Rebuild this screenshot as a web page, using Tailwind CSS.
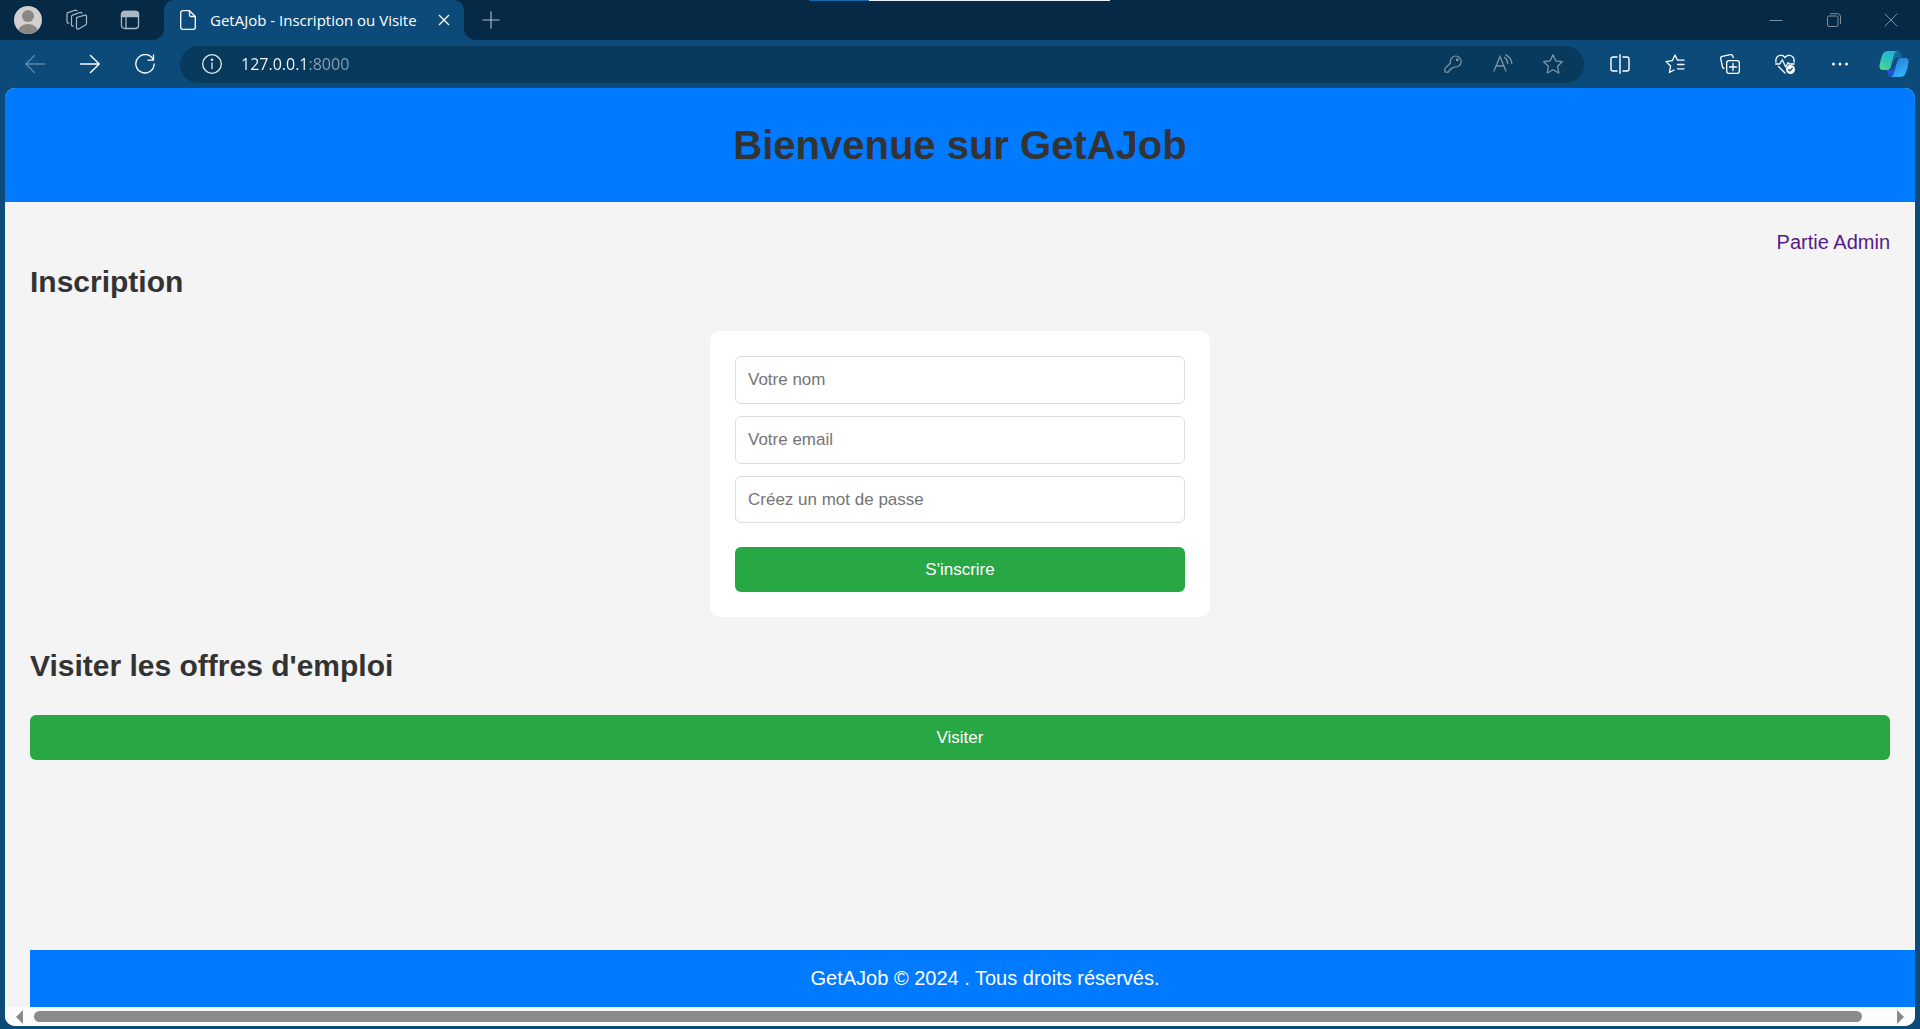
<!DOCTYPE html>
<html lang="fr">
<head>
<meta charset="utf-8">
<meta name="viewport" content="width=device-width, initial-scale=1">
<title>GetAJob - Inscription ou Visite</title>
<script src="https://cdn.jsdelivr.net/npm/@tailwindcss/browser@4"></script>
</head>
<body class="flex min-h-screen flex-col bg-[#0c4a79] font-['Open_Sans','Noto_Sans',sans-serif]">

<!-- Tab strip -->
<div class="relative flex h-10 shrink-0 items-center bg-[#062a45]">
  <div class="absolute top-0 left-1/2 -ml-[151px] flex h-px w-[301px]">
    <div class="w-[60px] bg-[#1468ad]"></div>
    <div class="flex-1 bg-[#e6f1f8]"></div>
  </div>
  <button aria-label="Profil" class="ml-3.5 size-7">
    <svg viewBox="0 0 28 28" class="size-7"><clipPath id="av"><circle cx="14" cy="14" r="14"/></clipPath><g clip-path="url(#av)"><rect width="28" height="28" fill="#d2d0ce"/><circle cx="14" cy="10" r="6" fill="#8a8784"/><path d="M4 27c0-5.500 4-9 10-9s10 3.500 10 9v2H4z" fill="#8a8784"/></g></svg>
  </button>
  <button aria-label="Espaces de travail" class="ml-6 text-[#a8b8c5]">
    <svg viewBox="0 0 22 22" class="size-[22px]" fill="none" stroke="currentColor" stroke-width="1.200" stroke-linejoin="round" stroke-linecap="round"><path d="M10.500 8.500 19 6.200q1.500-.3 1.500 1.100v7.200q0 1-1 1.400l-7 4q-2 .8-2-.9v-9.200q0-1 .9-1.300z"/><path d="M7.500 17q-2 .500-2-1.300V7.500q0-1 1-1.400l7.500-2.600q1.700-.5 2 .9"/><path d="M3 14Q1 14.400 1 12.700V5q0-1 1-1.400l7-2.300q1.700-.5 2 .7"/></svg>
  </button>
  <button aria-label="Onglets verticaux" class="ml-8 mr-6 text-[#a8b8c5]">
    <svg viewBox="0 0 20 20" class="size-5" fill="none" stroke="currentColor" stroke-width="1.300"><rect x="1.500" y="1.500" width="17" height="17" rx="3"/><path d="M6 6v12.500"/><path d="M1.500 6.500V4.500a3 3 0 0 1 3-3h11a3 3 0 0 1 3 3v2z" fill="currentColor"/></svg>
  </button>
  <div class="relative flex h-10 w-[300px] items-center rounded-t-[10px] bg-[#0c4a79] text-white">
    <svg viewBox="0 0 12 12" class="absolute bottom-0 right-full size-3"><path d="M12 0v12H0A12 12 0 0 0 12 0z" fill="#0c4a79"/></svg>
    <svg viewBox="0 0 12 12" class="absolute bottom-0 left-full size-3"><path d="M0 0v12h12A12 12 0 0 1 0 0z" fill="#0c4a79"/></svg>
    <svg viewBox="0 0 16 20" class="ml-4 h-5 w-4" fill="none" stroke="currentColor" stroke-width="1.300" stroke-linejoin="round"><path d="M2.700.700h6.800l5.800 5.800v10.800a2 2 0 0 1-2 2H2.700a2 2 0 0 1-2-2V2.700a2 2 0 0 1 2-2z"/><path d="M9.500.700v4.300a1.500 1.500 0 0 0 1.500 1.500h4.300"/></svg>
    <span class="ml-3.5 flex-1 whitespace-nowrap text-[15px]">GetAJob - Inscription ou Visite</span>
    <button aria-label="Fermer l'onglet" class="mr-3.5">
      <svg viewBox="0 0 12 12" class="size-3" stroke="currentColor" stroke-width="1.300"><path d="m1 1 10 10M11 1 1 11"/></svg>
    </button>
  </div>
  <button aria-label="Nouvel onglet" class="ml-[18px] text-[#a8b8c5]">
    <svg viewBox="0 0 18 18" class="size-[18px]" stroke="currentColor" stroke-width="1.200"><path d="M9 .5v17M.5 9h17"/></svg>
  </button>
  <div class="ml-auto flex text-[#7f909e]">
    <button aria-label="Réduire" class="flex w-[58px] justify-center"><svg viewBox="0 0 14 14" class="size-3.5" stroke="currentColor"><path d="M.5 7.500h13"/></svg></button>
    <button aria-label="Restaurer" class="flex w-[57px] justify-center"><svg viewBox="0 0 14 14" class="size-3.5" fill="none" stroke="currentColor"><rect x=".5" y="3" width="10.500" height="10.500" rx="1.500"/><path d="M3 .7h7.500a3 3 0 0 1 3 3V11"/></svg></button>
    <button aria-label="Fermer" class="flex w-[58px] justify-center"><svg viewBox="0 0 14 14" class="size-3.5" stroke="currentColor"><path d="m.7.7 12.600 12.600M13.300.7.7 13.300"/></svg></button>
  </div>
</div>

<!-- Toolbar -->
<div class="flex h-12 shrink-0 items-center pl-[7px] text-white">
  <button aria-label="Précédent" class="flex w-[55px] justify-center text-[#5a88aa]"><svg viewBox="0 0 20 20" class="size-5" fill="none" stroke="currentColor" stroke-width="1.400" stroke-linecap="round" stroke-linejoin="round"><path d="M19.300 10H.8M9.500 1.500.8 10l8.700 8.500"/></svg></button>
  <button aria-label="Suivant" class="flex w-[55px] justify-center"><svg viewBox="0 0 20 20" class="size-5" fill="none" stroke="currentColor" stroke-width="1.400" stroke-linecap="round" stroke-linejoin="round"><path d="M.7 10h18.500M10.500 1.500l8.700 8.500-8.700 8.500"/></svg></button>
  <button aria-label="Actualiser" class="flex w-[55px] justify-center"><svg viewBox="0 0 20 20" class="size-5" fill="none" stroke="currentColor" stroke-width="1.300" stroke-linecap="round" stroke-linejoin="round"><path d="M18.500 6.200A9.200 9.200 0 1 0 19.200 10M18.500.800v5.400H13"/></svg></button>
  <div class="mx-2 flex h-[37px] min-w-0 flex-1 items-center rounded-full bg-[#083a5e] pl-[22px] pr-1.5 text-[#7d95a8]">
    <svg viewBox="0 0 20 20" class="size-5 text-[#e4edf4]" fill="none" stroke="currentColor" stroke-width="1.300"><circle cx="10" cy="10" r="9.300"/><path d="M10 8.500V15"/><circle cx="10" cy="5.800" r=".6" fill="currentColor"/></svg>
    <input aria-label="Adresse" value="127.0.0.1:8000" class="ml-[19px] min-w-0 flex-1 bg-[linear-gradient(to_right,#ffffff_68px,#8d9fae_68px)] bg-clip-text text-base text-transparent outline-none">
    <button aria-label="Mots de passe" class="flex w-[50px] justify-center"><svg viewBox="0 0 18 18" class="size-[18px]" fill="none" stroke="currentColor" stroke-width="1.200" stroke-linejoin="round"><path d="M11.500 1a5.500 5.500 0 1 1-1.300 10.800L9 13H7v2H5v1.500l-.8.700H1.700q-.8 0-.8-.8v-2.500q0-.4.300-.7l5.300-5.200A5.600 5.600 0 0 1 11.500 1z"/><circle cx="13.300" cy="4.700" r=".9" fill="currentColor"/></svg></button>
    <button aria-label="Lecture à voix haute" class="flex w-[50px] justify-center"><svg viewBox="0 0 20 20" class="size-5" fill="none" stroke="currentColor" stroke-width="1.300" stroke-linecap="round"><path d="M1 17 7 2.500 13 17M3.200 12h7.600M11.500 3.500a8 8 0 0 1 3.300 6M12.800.8a11 11 0 0 1 6 8.700"/></svg></button>
    <button aria-label="Ajouter aux favoris" class="flex w-[50px] justify-center"><svg viewBox="0 0 20 20" class="size-5" fill="none" stroke="currentColor" stroke-width="1.300" stroke-linejoin="round"><path d="m10 .8 2.800 6 6.500.9-4.700 4.600 1.200 6.700-5.800-3.200L4.200 19l1.200-6.700L.7 7.700l6.500-.9z"/></svg></button>
  </div>
  <button aria-label="Écran partagé" class="flex w-[55px] justify-center"><svg viewBox="0 0 20 20" class="size-5" fill="none" stroke="currentColor" stroke-width="1.400" stroke-linecap="round"><path d="M10 .7v18.600M7 3H3a2 2 0 0 0-2 2v10a2 2 0 0 0 2 2h4M13 3h4a2 2 0 0 1 2 2v10a2 2 0 0 1-2 2h-4"/></svg></button>
  <button aria-label="Favoris" class="flex w-[55px] justify-center"><svg viewBox="0 0 20 20" class="size-5" fill="none" stroke="currentColor" stroke-width="1.300" stroke-linecap="round" stroke-linejoin="round"><path d="M19 6.200h-6.500L10 1 7.300 6.700 1 7.600 5.600 12l-1.200 6.500L9 16M12.500 10.500H19M12.500 14.800H19"/></svg></button>
  <button aria-label="Collections" class="flex w-[55px] justify-center"><svg viewBox="0 0 20 20" class="size-5" fill="none" stroke="currentColor" stroke-width="1.300" stroke-linecap="round" stroke-linejoin="round"><rect x="6.700" y="6.700" width="12.600" height="12.600" rx="2.200"/><path d="M13 9.500v7M9.500 13h7M4 14.300Q2.700 14 2.500 13L.7 4.500Q.5 2.700 2 2.300L10.500.7q2-.2 2.300 1.300l.4 1.700"/></svg></button>
  <button aria-label="Informations de base" class="flex w-[55px] justify-center"><svg viewBox="0 0 20 20" class="size-5" fill="none" stroke="currentColor" stroke-width="1.300" stroke-linecap="round" stroke-linejoin="round"><path d="M1 8C.3 4.500 2.300 1.500 5.300 1.300 7.500 1 9.200 2.200 10 3.700c.8-1.500 2.500-2.700 4.700-2.400C17.700 1.500 19.700 4.500 19 8M.7 10h4l2.600-4.200 3.400 7.200 2.400-4.500 1 1.500h5M3.500 12.500 10 19"/><circle cx="15.500" cy="15.500" r="4.500" fill="currentColor" stroke="none"/><path d="m13.700 15.700 1.300 1.200 2.300-2.600" stroke="#0c4a79"/></svg></button>
  <button aria-label="Paramètres" class="flex w-[55px] justify-center"><svg viewBox="0 0 18 18" class="size-[18px]" fill="currentColor"><circle cx="2.500" cy="9" r="1.500"/><circle cx="9" cy="9" r="1.500"/><circle cx="15.500" cy="9" r="1.500"/></svg></button>
  <button aria-label="Copilot" class="flex w-[53px] justify-center">
    <svg viewBox="0 0 30 28" class="h-7 w-[30px]"><defs><linearGradient id="ca" x1="0" y1="1" x2=".6" y2="0"><stop offset="0" stop-color="#5bd68a"/><stop offset=".5" stop-color="#2fc6b4"/><stop offset="1" stop-color="#25b4dc"/></linearGradient><linearGradient id="cb" x1="0" y1="0" x2=".5" y2="1"><stop offset="0" stop-color="#2a74d8"/><stop offset="1" stop-color="#30b3f6"/></linearGradient></defs><path d="M15 1h3.500q2.500 0 3.300 2.500L23 7.500h-4.500q-2 0-2.700 2.500L14 15z" fill="#146a94"/><path d="M15 27h-3q-2.500 0-3.200-2.500L7.500 20H12q2 0 2.600-2.500L16 13z" fill="#1c54d0"/><path d="M9.500 1H18q-2 .5-2.700 3l-3.500 13q-.8 3-3.800 3H4Q0 20 .500 15.500 1.500 8.500 4 3.500 5.500 1 9.500 1z" fill="url(#ca)"/><path d="M20.500 27H12q2-.5 2.700-3l3.500-13q.8-3 3.800-3h4q4 0 3.500 4.500-1 7-3.500 12-1.500 2.500-5.500 2.500z" fill="url(#cb)"/></svg>
  </button>
</div>

<!-- Page viewport -->
<div class="mx-[5px] mb-[3px] flex flex-1 flex-col overflow-hidden rounded-[10px] bg-[#f4f4f4] font-['Liberation_Sans',Arial,sans-serif] text-xl text-[#333333]">
  <header class="bg-[#007bff] px-6 py-[25px] text-center">
    <h1 class="text-[40px] leading-[64px] font-bold">Bienvenue sur GetAJob</h1>
  </header>

  <main class="flex flex-1 flex-col px-[25px] pt-6 pb-[25px]">
    <nav class="text-right leading-8"><a href="#admin" class="text-[#551a8b]">Partie Admin</a></nav>

    <section>
      <h2 class="text-3xl leading-[48px] font-bold">Inscription</h2>
      <form class="mx-auto my-[25px] flex w-full max-w-[500px] flex-col gap-3 rounded-[10px] bg-white p-[25px] text-[17px]">
        <input type="text" aria-label="Votre nom" placeholder="Votre nom" class="h-12 rounded-md border border-[#dddddd] px-3 placeholder:text-[#757575]">
        <input type="email" aria-label="Votre email" placeholder="Votre email" class="h-12 rounded-md border border-[#dddddd] px-3 placeholder:text-[#757575]">
        <input type="password" aria-label="Créez un mot de passe" placeholder="Créez un mot de passe" class="h-[47px] rounded-md border border-[#dddddd] px-3 placeholder:text-[#757575]">
        <button type="button" class="mt-3 h-[45px] rounded-md bg-[#28a745] text-white">S'inscrire</button>
      </form>
    </section>

    <section>
      <h2 class="text-3xl leading-[48px] font-bold">Visiter les offres d'emploi</h2>
      <button type="button" class="mt-[25px] h-[45px] w-full rounded-md bg-[#28a745] text-[17px] text-white">Visiter</button>
    </section>
  </main>

  <!-- The footer is as wide as the page but starts at the content margin, so it runs past the right edge -->
  <footer class="ml-[25px] -mr-[25px] bg-[#007bff] py-3 text-center leading-[33px] text-white">GetAJob © 2024 . Tous droits réservés.</footer>

  <div class="flex h-[19px] items-center bg-[#fcfcfc] px-[11px]">
    <svg viewBox="0 0 7 14" class="h-3.5 w-[7px]" fill="#8b8b8b"><path d="M7 0v14L0 7z"/></svg>
    <div class="ml-[11px] mr-[35px] h-[11px] flex-1 rounded-full bg-[#8b8b8b]"></div>
    <svg viewBox="0 0 7 14" class="h-3.5 w-[7px]" fill="#8b8b8b"><path d="M0 0v14l7-7z"/></svg>
  </div>
</div>
</body>
</html>
